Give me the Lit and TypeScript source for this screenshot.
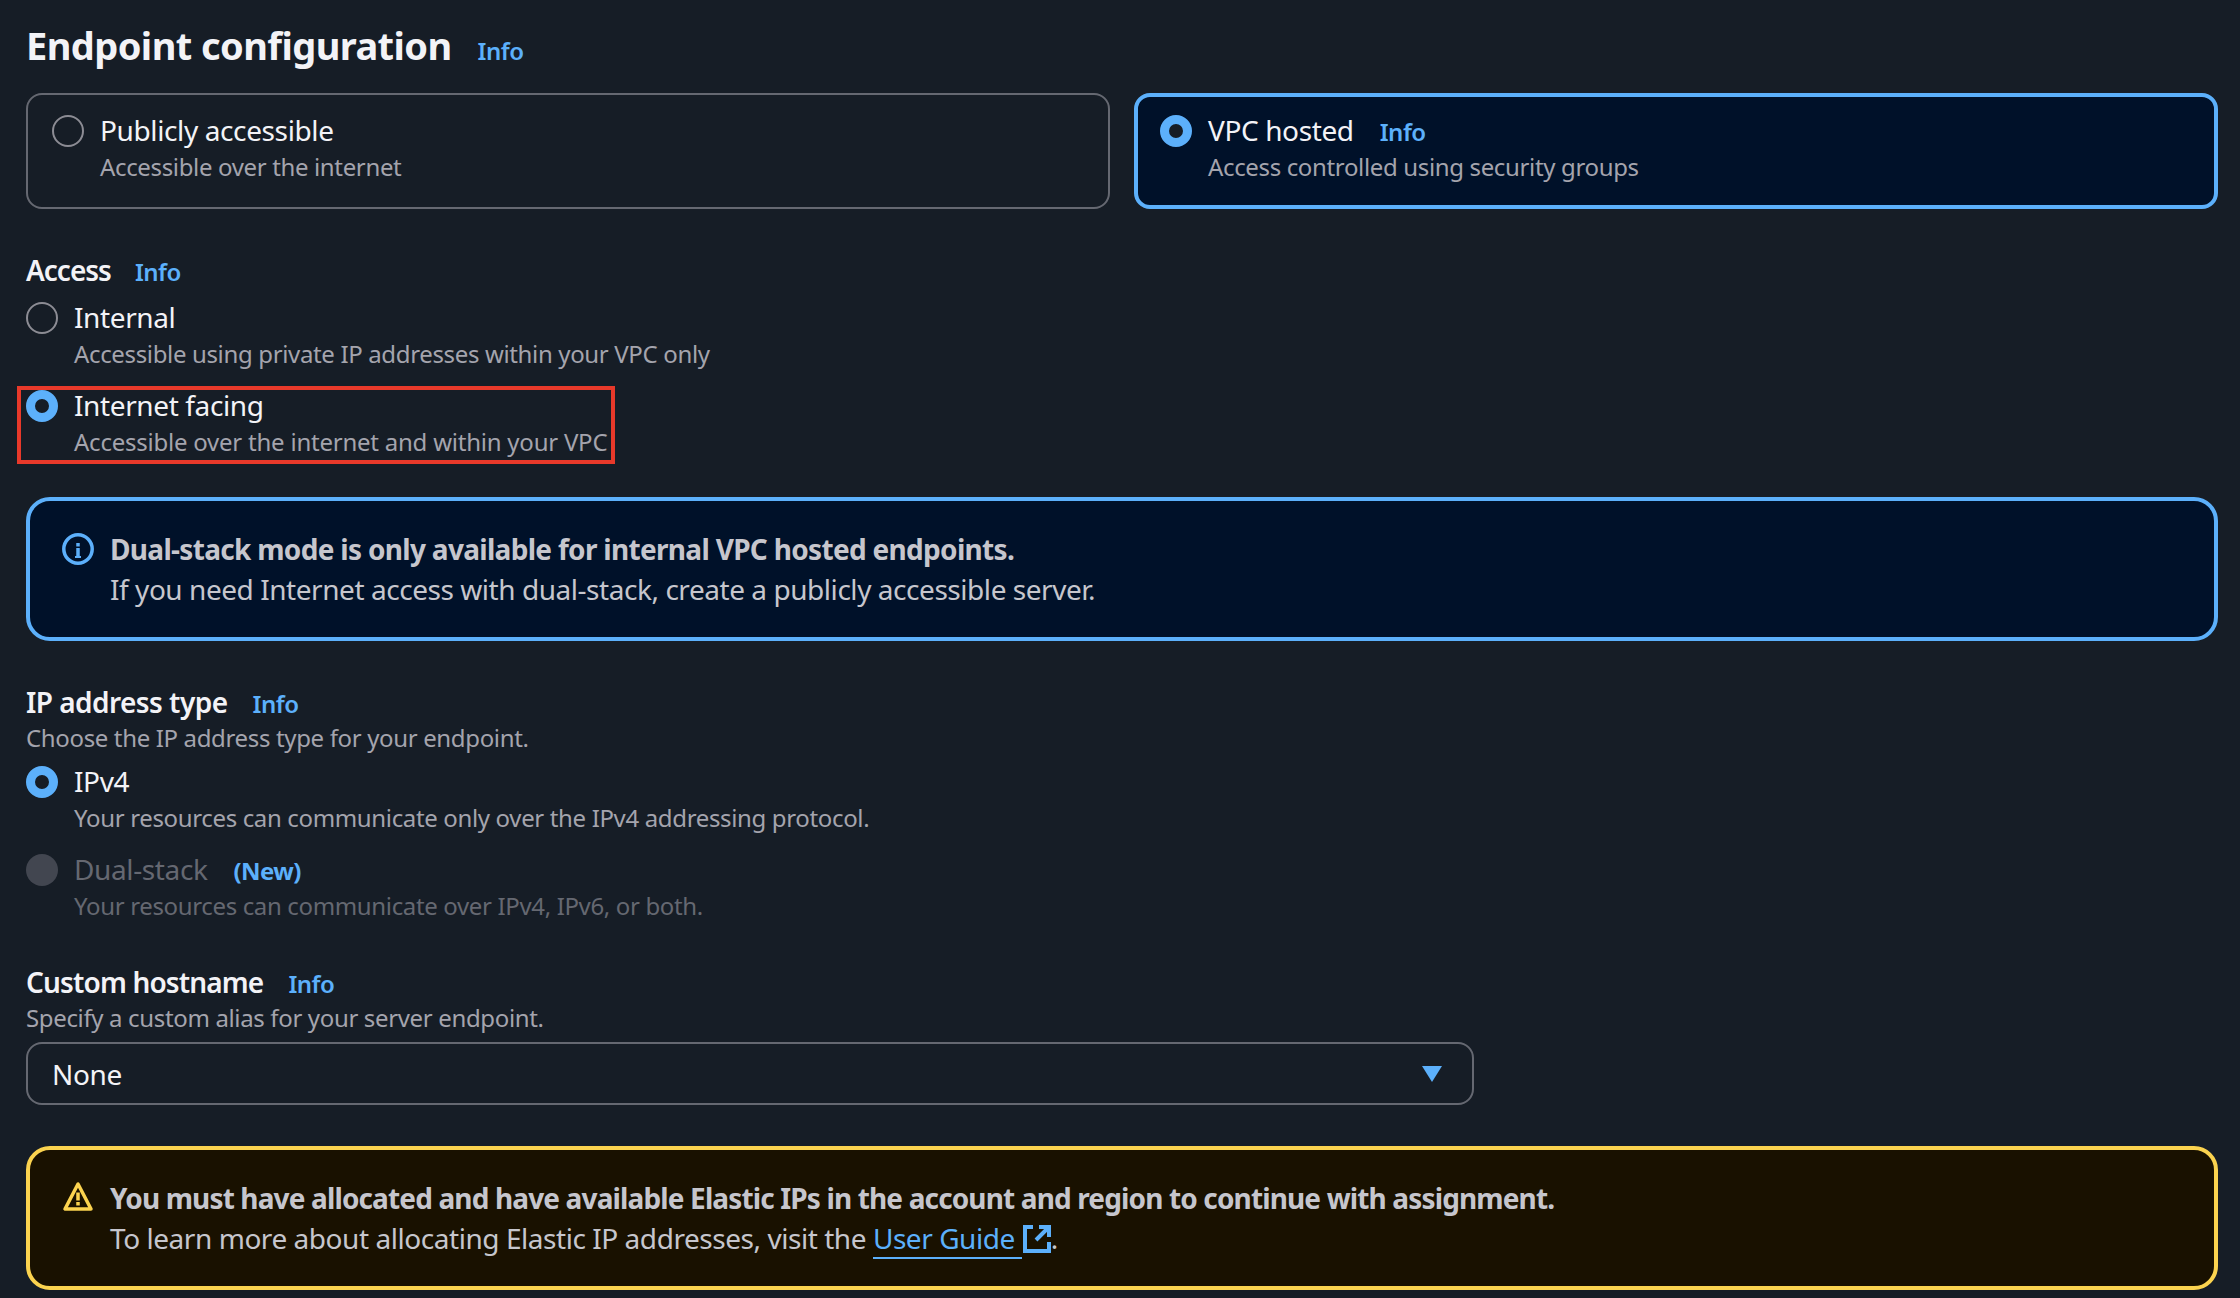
import { LitElement, html, css } from "lit";
import { customElement } from "lit/decorators.js";

@customElement("app-root")
export class AppRoot extends LitElement {
  static styles = css`
    :host {
      display: block;
      box-sizing: border-box;
      width: 2240px;
      height: 1298px;
      padding: 23px 22px 0 26px;
      overflow: hidden;
      background: #161d26;
      color: #f3f3f7;
      font-family: "Noto Sans", sans-serif;
      font-size: 28px;
      line-height: 36px;
      letter-spacing: -0.38px;
    }
    .info { color: #5cb0fb; font-size: 24px; font-weight: 600; letter-spacing: -0.5px; }
    .h1row { display: flex; align-items: baseline; gap: 26px; height: 44px; margin-bottom: 26px; }
    h1 { margin: 0; font-size: 38px; line-height: 44px; font-weight: 700; color: #f3f3f7; letter-spacing: -0.58px; }
    .cards { display: grid; grid-template-columns: 1fr 1fr; gap: 24px; height: 116px; margin-bottom: 43px; }
    .card { box-sizing: border-box; border: 2px solid #656871; border-radius: 16px; padding: 18px 24px; display: flex; gap: 16px; }
    .card.sel { border: 4px solid #5cb0fb; background: #001129; padding: 16px 22px; }
    .radio { flex: none; box-sizing: border-box; width: 32px; height: 32px; margin-top: 2px; border: 2px solid #8c8c94; border-radius: 50%; }
    .radio.on { border: 9px solid #5cb0fb; background: #161d26; }
    .radio.off { border: none; background: #424650; }
    .opt { position: relative; display: flex; gap: 16px; }
    .opt + .opt { margin-top: 16px; }
    .title { display: flex; align-items: baseline; gap: 26px; white-space: nowrap; height: 34px; line-height: 34px; }
    .desc { font-size: 24px; color: #a4a4ad; white-space: nowrap; letter-spacing: -0.35px; margin-top: 2px; }
    .desc.wide { letter-spacing: -0.23px; }
    .dis .lbl { color: #656871; }
    .dis .desc { color: #656871; }
    .sec { font-size: 28px; font-weight: 600; letter-spacing: -0.85px; display: flex; align-items: baseline; gap: 25px; color: #f3f3f7; height: 36px; }
    .sec.loose { letter-spacing: -0.55px; }
    .hint { font-size: 24px; color: #a4a4ad; letter-spacing: -0.35px; }
    .access { margin-bottom: 12px; letter-spacing: -1px; gap: 24px; }
    .mark { position: absolute; left: -9px; top: -2px; width: 598px; height: 78px; box-sizing: border-box; border: 4px solid #e8392a; }
    .alert { box-sizing: border-box; height: 144px; border: 4px solid #5cb0fb; border-radius: 24px; background: #001129; padding: 28px 32px; display: flex; gap: 16px; color: #c6c6cd; line-height: 40px; font-size: 28px; letter-spacing: -0.45px; }
    .alert.warn { border-color: #fbd34f; background: #191100; margin-top: 41px; }
    .alert > svg { flex: none; width: 32px; height: 32px; margin-top: 4px; }
    .alert.warn > svg { margin-top: 2px; }
    .alert b { font-weight: 700; display: block; letter-spacing: -0.69px; }
    .alert.warn b { letter-spacing: -0.86px; }
    .alert a { color: #5cb0fb; text-decoration: none; border-bottom: 2.500px solid #5cb0fb; }
    .ext { width: 28px; height: 28px; vertical-align: -4px; margin-left: 1px; }
    .m37 { margin-top: 37px; }
    .m43 { margin-top: 43px; }
    .m40 { margin-top: 40px; }
    .gap8 { margin-bottom: 8px; }
    .gap6 { margin-bottom: 6px; }
    .select { box-sizing: border-box; width: 1448px; height: 63px; border: 2px solid #656871; border-radius: 16px; padding: 0 24px; display: flex; align-items: center; justify-content: space-between; color: #f3f3f7; }
    .select svg { width: 20px; height: 16px; margin-right: 6px; }
    .new { color: #5cb0fb; font-weight: 700; font-size: 24px; letter-spacing: -0.6px; }
  `;

  private opt(title: unknown, desc: string, kind = "", extra: unknown = "") {
    return html`<div class="opt ${kind === "off" ? "dis" : ""}">
      <span class="radio ${kind}"></span>
      <div><div class="title"><span class="lbl">${title}</span>${extra}</div><div class="desc">${desc}</div></div>
    </div>`;
  }

  render() {
    const info = html`<span class="info">Info</span>`;
    return html`
      <div class="h1row"><h1>Endpoint configuration</h1>${info}</div>
      <div class="cards">
        <div class="card"><span class="radio"></span><div><div class="title">Publicly accessible</div><div class="desc">Accessible over the internet</div></div></div>
        <div class="card sel"><span class="radio on"></span><div><div class="title"><span>VPC hosted</span>${info}</div><div class="desc">Access controlled using security groups</div></div></div>
      </div>
      <div class="sec access"><span>Access</span>${info}</div>
      ${this.opt("Internal", "Accessible using private IP addresses within your VPC only")}
      <div class="opt">
        <span class="radio on"></span>
        <div><div class="title">Internet facing</div><div class="desc wide">Accessible over the internet and within your VPC</div></div>
        <span class="mark"></span>
      </div>
      <div class="alert m37">
        <svg viewBox="0 0 32 32" fill="none" stroke="#5cb0fb"><circle cx="16" cy="16" r="14.200" stroke-width="3.500"/><path d="M16 10v3.500M16 15v9" stroke-width="3.500"/><path d="M13 24h6" stroke-width="2"/></svg>
        <div><b>Dual-stack mode is only available for internal VPC hosted endpoints.</b>If you need Internet access with dual-stack, create a publicly accessible server.</div>
      </div>
      <div class="sec loose m43"><span>IP address type</span>${info}</div>
      <div class="hint gap8">Choose the IP address type for your endpoint.</div>
      ${this.opt("IPv4", "Your resources can communicate only over the IPv4 addressing protocol.", "on")}
      ${this.opt("Dual-stack", "Your resources can communicate over IPv4, IPv6, or both.", "off", html`<span class="new">(New)</span>`)}
      <div class="sec m40"><span>Custom hostname</span>${info}</div>
      <div class="hint gap6">Specify a custom alias for your server endpoint.</div>
      <div class="select"><span>None</span><svg viewBox="0 0 20 16"><path d="M0 0h20L10 16z" fill="#5cb0fb"/></svg></div>
      <div class="alert warn">
        <svg viewBox="0 0 32 32" fill="none" stroke="#fbd34f" stroke-width="3.500" stroke-linejoin="round"><path d="M16 4 3 29h26z"/><path d="M16 12.500v8M16 22v3.500"/></svg>
        <div><b>You must have allocated and have available Elastic IPs in the account and region to continue with assignment.</b>To learn more about allocating Elastic IP addresses, visit the <a href="#">User Guide&nbsp;</a><svg class="ext" viewBox="0 0 28 28" fill="none" stroke="#5cb0fb" stroke-width="4"><path d="M10 2H2v24h24v-9"/><path d="M13 15 25 3M16 2h10v10"/></svg>.</div>
      </div>
    `;
  }
}
